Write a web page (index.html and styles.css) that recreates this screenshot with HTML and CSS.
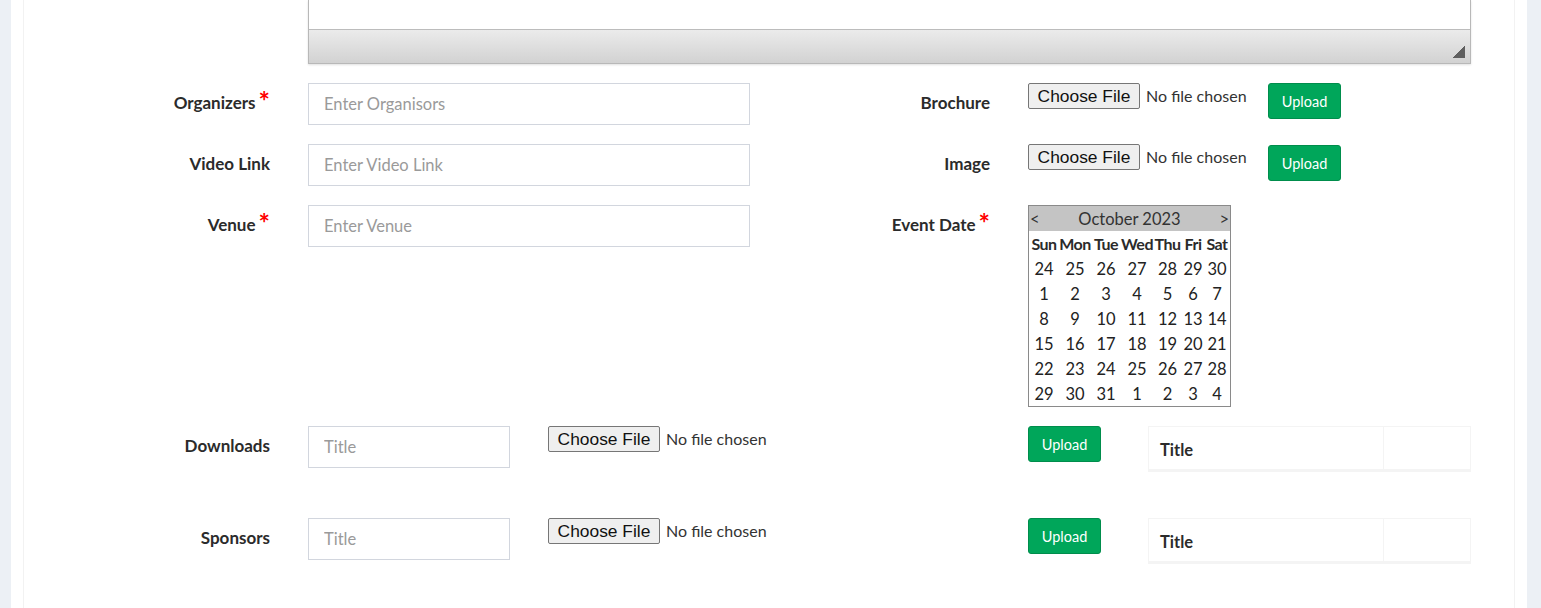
FILE: index.html
```html
<!DOCTYPE html>
<html lang="en">
<head>
<meta charset="utf-8">
<title>Event form</title>
<link rel="stylesheet" href="styles.css">
</head>
<body>
<div class="wrapper">
  <div class="card">
    <div class="row editor-row">
      <div class="editor">
        <div class="editor-body"></div>
        <div class="editor-bar"><span class="resize"></span></div>
      </div>
    </div>

    <div class="row">
      <label class="label">Organizers<span class="req">*</span></label>
      <input class="control half" type="text" placeholder="Enter Organisors">
      <label class="label label-r">Brochure</label>
      <div class="file file-r"><span class="file-btn">Choose File</span><span class="file-name">No file chosen</span></div>
      <button class="upload">Upload</button>
    </div>

    <div class="row">
      <label class="label">Video Link</label>
      <input class="control half" type="text" placeholder="Enter Video Link">
      <label class="label label-r">Image</label>
      <div class="file file-r"><span class="file-btn">Choose File</span><span class="file-name">No file chosen</span></div>
      <button class="upload upload-low">Upload</button>
    </div>

    <div class="row">
      <label class="label">Venue<span class="req">*</span></label>
      <input class="control half" type="text" placeholder="Enter Venue">
      <label class="label label-r">Event Date<span class="req">*</span></label>
      <table class="cal">
        <colgroup>
          <col class="c30"><col class="c32"><col class="c30"><col class="c32"><col class="c29"><col class="c22"><col class="c26">
        </colgroup>
        <thead>
          <tr class="cal-head"><th colspan="7"><div class="cal-nav"><span>&lt;</span><span>October 2023</span><span>&gt;</span></div></th></tr>
          <tr class="cal-days"><th>Sun</th><th>Mon</th><th>Tue</th><th>Wed</th><th>Thu</th><th>Fri</th><th>Sat</th></tr>
        </thead>
        <tbody>
          <tr><td>24</td><td>25</td><td>26</td><td>27</td><td>28</td><td>29</td><td>30</td></tr>
          <tr><td>1</td><td>2</td><td>3</td><td>4</td><td>5</td><td>6</td><td>7</td></tr>
          <tr><td>8</td><td>9</td><td>10</td><td>11</td><td>12</td><td>13</td><td>14</td></tr>
          <tr><td>15</td><td>16</td><td>17</td><td>18</td><td>19</td><td>20</td><td>21</td></tr>
          <tr><td>22</td><td>23</td><td>24</td><td>25</td><td>26</td><td>27</td><td>28</td></tr>
          <tr><td>29</td><td>30</td><td>31</td><td>1</td><td>2</td><td>3</td><td>4</td></tr>
        </tbody>
      </table>
    </div>

    <div class="row row-list">
      <label class="label">Downloads</label>
      <input class="control small" type="text" placeholder="Title">
      <div class="file file-wide"><span class="file-btn">Choose File</span><span class="file-name">No file chosen</span></div>
      <button class="upload">Upload</button>
      <table class="list">
        <thead><tr><th class="list-title">Title</th><th class="list-act"></th></tr></thead>
      </table>
    </div>

    <div class="row row-list">
      <label class="label">Sponsors</label>
      <input class="control small" type="text" placeholder="Title">
      <div class="file file-wide"><span class="file-btn">Choose File</span><span class="file-name">No file chosen</span></div>
      <button class="upload">Upload</button>
      <table class="list">
        <thead><tr><th class="list-title">Title</th><th class="list-act"></th></tr></thead>
      </table>
    </div>
  </div>
</div>
</body>
</html>
```

FILE: styles.css
```css
* { box-sizing: border-box; }

html, body {
  margin: 0;
  padding: 0;
  height: 100%;
}

body {
  background: #ecf0f5;
  font-family: "Lato", "Liberation Sans", sans-serif;
  font-size: 16px;
  color: #333;
  overflow: hidden;
}

.wrapper {
  background: #fff;
  margin: 0 14px 0 11px;
  padding: 0 12px;
  min-height: 100%;
}

.card {
  border-left: 1px solid #f2f2f2;
  border-right: 1px solid #f2f2f2;
  min-height: 608px;
}

.row {
  display: flex;
  align-items: flex-start;
  margin-bottom: 19px;
}

.editor-row {
  padding-left: 284px;
  margin-bottom: 19px;
}

.editor {
  width: 1163px;
  border: 1px solid #b8b8b8;
  border-top: none;
  box-shadow: 0 1px 2px rgba(0, 0, 0, 0.12);
}

.editor-body {
  height: 29px;
  background: #fff;
}

.editor-bar {
  height: 34px;
  border-top: 1px solid #bcbcbc;
  background: linear-gradient(#ebebeb, #d2d2d2);
  display: flex;
  justify-content: flex-end;
  align-items: flex-end;
  padding: 0 5px 5px 0;
}

.resize {
  width: 13px;
  height: 13px;
  background: linear-gradient(to bottom right, transparent 50%, #5f5f5f 50%);
}

.label {
  width: 246px;
  height: 42px;
  line-height: 40px;
  margin-right: 38px;
  text-align: right;
  font-weight: 700;
  font-size: 17px;
  color: #2b2b2b;
  white-space: nowrap;
}

.label-r {
  width: 240px;
}

.req {
  display: inline-block;
  color: #ff0000;
  font-size: 27px;
  font-weight: 700;
  line-height: 20px;
  margin-left: 3px;
  vertical-align: top;
  position: relative;
  top: 8px;
}

.control {
  height: 42px;
  border: 1px solid #d2d6de;
  border-radius: 0;
  padding: 0 15px;
  font-family: inherit;
  font-size: 16.5px;
  color: #333;
  background: #fff;
  outline: none;
}

.control::placeholder {
  color: #9a9a9a;
}

.half { width: 442px; }
.small { width: 202px; margin-right: 38px; }

.file {
  display: flex;
  align-items: center;
  height: 26px;
}

.file-r { width: 240px; }
.file-wide { width: 480px; }

.file-btn {
  display: inline-flex;
  align-items: center;
  justify-content: center;
  width: 112px;
  height: 26px;
  background: #efefef;
  border: 1px solid #767676;
  border-radius: 2px;
  font-family: "Liberation Sans", Arial, sans-serif;
  font-size: 17.4px;
  color: #111;
}

.file-name {
  margin-left: 6px;
  font-size: 16px;
  color: #333;
  white-space: nowrap;
  position: relative;
  top: -1px;
}

.upload {
  width: 73px;
  height: 36px;
  background: #00a65a;
  border: 1px solid #008d4c;
  border-radius: 3px;
  color: #fff;
  font-family: inherit;
  font-size: 14.5px;
  padding: 0;
}

.upload-low { margin-top: 1px; }

.cal {
  border: 1px solid #8a8a8a;
  border-collapse: separate;
  border-spacing: 0;
  table-layout: fixed;
  width: 203px;
  font-size: 16.5px;
  color: #222;
}

.c30 { width: 30px; }
.c32 { width: 32px; }
.c29 { width: 29px; }
.c22 { width: 22px; }
.c26 { width: 26px; }

.cal th, .cal td {
  padding: 0;
  height: 25px;
  text-align: center;
  white-space: nowrap;
  overflow: visible;
}

.cal-head th {
  background: #c4c4c4;
  font-weight: 400;
  color: #333;
}

.cal-nav {
  display: flex;
  justify-content: space-between;
  padding: 0 1px;
}

.cal-days th {
  font-weight: 700;
  font-size: 16px;
  letter-spacing: -0.5px;
  color: #2b2b2b;
}

.row-list {
  height: 46px;
  margin-bottom: 46px;
}

.row-list .upload {
  margin-right: 47px;
}

.list {
  width: 323px;
  border: 1px solid #f4f4f4;
  border-collapse: separate;
  border-spacing: 0;
}

.list th {
  height: 44px;
  border-bottom: 2px solid #f4f4f4;
  text-align: left;
  padding: 4px 11px 0;
  font-weight: 700;
  font-size: 16.5px;
  color: #2b2b2b;
}

.list-title {
  width: 235px;
  border-right: 1px solid #f4f4f4;
}
```
